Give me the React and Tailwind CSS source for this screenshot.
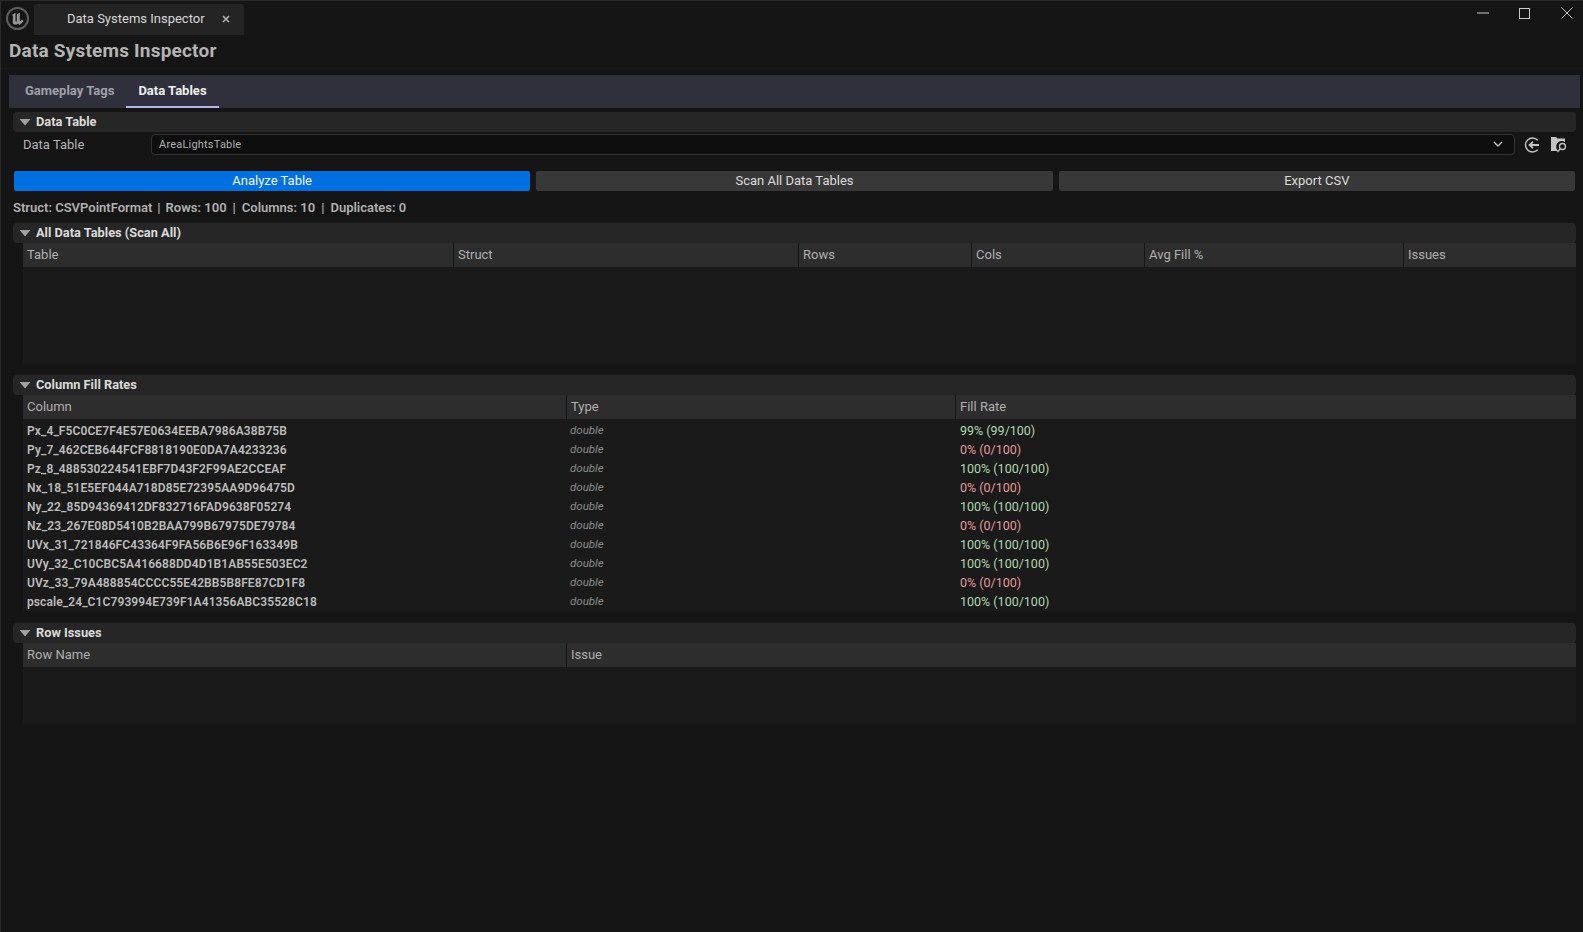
const font = { fontFamily: 'Roboto, "Liberation Sans", sans-serif' };

function Section({ title }) {
  return (
    <div className="flex h-5 ml-[4px] mr-[7px] items-center rounded-[4px] bg-[#262626]">
      <svg width="12" height="8" viewBox="0 0 12 8" className="ml-[6px] mr-[5px] shrink-0">
        <path d="M0.5 1 H11.5 L6 7.5 Z" fill="#a0a0a0" />
      </svg>
      <span className="text-[12.8px] font-bold leading-none text-[#dcdcdc]">{title}</span>
    </div>
  );
}

function HeaderRow({ cols }) {
  return (
    <div className="flex h-6 bg-[#2d2d2d]">
      {cols.map(([name, w], i) => (
        <div
          key={name}
          style={w ? { width: w } : undefined}
          className={`flex items-center pl-1 text-[13px] text-[#b0b0b0] ${w ? "shrink-0" : "grow"} ${
            i < cols.length - 1 ? "border-r border-[#161616]" : ""
          }`}
        >
          {name}
        </div>
      ))}
    </div>
  );
}

const rows = [
  ["Px_4_F5C0CE7F4E57E0634EEBA7986A38B75B", "99% (99/100)", true],
  ["Py_7_462CEB644FCF8818190E0DA7A4233236", "0% (0/100)", false],
  ["Pz_8_488530224541EBF7D43F2F99AE2CCEAF", "100% (100/100)", true],
  ["Nx_18_51E5EF044A718D85E72395AA9D96475D", "0% (0/100)", false],
  ["Ny_22_85D94369412DF832716FAD9638F05274", "100% (100/100)", true],
  ["Nz_23_267E08D5410B2BAA799B67975DE79784", "0% (0/100)", false],
  ["UVx_31_721846FC43364F9FA56B6E96F163349B", "100% (100/100)", true],
  ["UVy_32_C10CBC5A416688DD4D1B1AB55E503EC2", "100% (100/100)", true],
  ["UVz_33_79A488854CCCC55E42BB5B8FE87CD1F8", "0% (0/100)", false],
  ["pscale_24_C1C793994E739F1A41356ABC35528C18", "100% (100/100)", true],
];

export default function App() {
  return (
    <div
      style={font}
      className="relative h-[932px] w-[1583px] overflow-hidden border-l border-t border-[#2c2c2c] bg-[#151515]"
    >
      {/* title bar */}
      <div className="flex h-[34px] items-end">
        <div className="ml-[5px] mr-[5px] mb-[5px] flex h-[23px] w-[23px] items-center justify-center rounded-full border-2 border-[#5e5e5e]">
          <svg width="15" height="15" viewBox="0 0 15 15">
            <path
              d="M1.5 4.5 L5.5 1.5 L5.5 10 C5.8 10.8 6.4 10.8 6.8 10.2 L6.8 3.5 L9.8 1.5 L9.8 10.5 L12 8.5 L13.5 10 C12 12 10.5 13.6 9.2 14 L8 12.4 C6.5 14 4 14 3 12.4 C2.6 11.5 3 6 3 4.5 Z"
              fill="#969696"
            />
          </svg>
        </div>
        <div className="flex h-[31px] w-[210px] items-center rounded-t-[3px] bg-[#242424] pb-[2px]">
          <span className="ml-[33px] text-[13px] text-[#d8d8d8]">Data Systems Inspector</span>
          <svg width="8" height="8" viewBox="0 0 8 8" className="ml-[17px]">
            <path d="M1 1 L7 7 M7 1 L1 7" stroke="#b0b0b0" strokeWidth="1.6" />
          </svg>
        </div>
        <div className="mb-[16px] ml-auto mr-[10px] flex items-center gap-[30px]">
          <svg width="12" height="2" viewBox="0 0 12 2">
            <path d="M0 1 H12" stroke="#c8c8c8" strokeWidth="1" />
          </svg>
          <svg width="11" height="11" viewBox="0 0 11 11">
            <rect x="0.5" y="0.5" width="10" height="10" fill="none" stroke="#c8c8c8" />
          </svg>
          <svg width="12" height="12" viewBox="0 0 12 12" className="ml-[1px]">
            <path d="M0.5 0.5 L11.5 11.5 M11.5 0.5 L0.5 11.5" stroke="#c8c8c8" strokeWidth="1" />
          </svg>
        </div>
      </div>

      {/* page title */}
      <div className="flex h-[34px] items-center pl-2 text-[19px] font-bold tracking-[0.2px] text-[#b4b4b4] border-b border-[#1a1a1a]">
        Data Systems Inspector
      </div>

      {/* tabs */}
      <div className="mt-[6px] ml-2 mr-[3px] flex h-[33px] bg-[#2f303c]">
        <div className="flex w-[117px] items-center pl-4 pb-[2px] text-[13px] font-bold text-[#a0a0a8]">
          Gameplay Tags
        </div>
        <div className="flex w-[93px] items-center justify-center border-b-2 border-[#b4b4f0] text-[13px] font-bold text-[#f0f0f0]">
          Data Tables
        </div>
      </div>

      <div className="mt-1 pl-2 pr-0">
        <Section title="Data Table" />
        <div className="mt-[2px] flex h-[21px] items-center">
          <span className="ml-[14px] w-[128px] text-[13px] text-[#b4b4b4]">Data Table</span>
          <div className="flex h-[21px] w-[1364px] items-center justify-between rounded-[4px] border border-[#333333] bg-[#0e0e0e] pl-[7px] pr-[11px]">
            <span className="pt-[1px] text-[11px] tracking-[0.2px] text-[#b0b0b0]">AreaLightsTable</span>
            <svg width="10" height="7" viewBox="0 0 10 7">
              <path d="M1 1 L5 5 L9 1" fill="none" stroke="#c0c0c0" strokeWidth="1.4" />
            </svg>
          </div>
          <svg width="16" height="16" viewBox="0 0 16 16" className="ml-[9px]">
            <path d="M13.6 3.2 A7 7 0 1 0 13.6 12.8" fill="none" stroke="#c4c4c4" strokeWidth="1.4" />
            <path d="M15 8 H6 M9 4.8 L5.5 8 L9 11.2" fill="none" stroke="#c4c4c4" strokeWidth="1.8" />
          </svg>
          <svg width="17" height="16" viewBox="0 0 17 16" className="ml-[11px]">
            <path d="M0 0 H5 L6.5 1.5 H14 V5 A5 5 0 0 0 7.5 14 H0 Z" fill="#c4c4c4" />
            <circle cx="11.5" cy="9.5" r="3" fill="none" stroke="#c4c4c4" strokeWidth="1.3" />
            <path d="M9.3 11.8 L6.5 15" stroke="#c4c4c4" strokeWidth="1.3" />
          </svg>
        </div>

        <div className="mt-[16px] ml-[5px] mr-[8px] flex gap-[6px]">
          <div className="flex h-5 flex-1 items-center justify-center rounded-[2px] bg-[#0070e0] text-[13px] text-[#f4f4f4]">
            Analyze Table
          </div>
          <div className="flex h-5 flex-1 items-center justify-center rounded-[2px] bg-[#383838] text-[13px] text-[#dcdcdc]">
            Scan All Data Tables
          </div>
          <div className="flex h-5 flex-1 items-center justify-center rounded-[2px] bg-[#383838] text-[13px] text-[#dcdcdc]">
            Export CSV
          </div>
        </div>

        <div className="ml-[4px] mt-[9px] flex h-[15px] items-center text-[13px] font-semibold text-[#b0b0b0] whitespace-pre">
          <span>Struct: CSVPointFormat</span>
          <span className="mx-[5px]">|</span>
          <span>Rows: 100</span>
          <span className="mx-[6px]">|</span>
          <span>Columns: 10</span>
          <span className="mx-[6px]">|</span>
          <span>Duplicates: 0</span>
        </div>

        <div className="mt-[8px]">
          <Section title="All Data Tables (Scan All)" />
          <div className="ml-[14px] mr-[7px]">
            <HeaderRow
              cols={[
                ["Table", "431px"],
                ["Struct", "345px"],
                ["Rows", "173px"],
                ["Cols", "173px"],
                ["Avg Fill %", "259px"],
                ["Issues", null],
              ]}
            />
            <div className="h-[96px] bg-[#1a1a1a]" />
          </div>
        </div>

        <div className="mt-[12px]">
          <Section title="Column Fill Rates" />
          <div className="ml-[14px] mr-[7px]">
            <HeaderRow
              cols={[
                ["Column", "544px"],
                ["Type", "389px"],
                ["Fill Rate", null],
              ]}
            />
            <div className="bg-[#1a1a1a] pt-[2px]">
              {rows.map(([name, rate, ok]) => (
                <div key={name} className="flex h-[19px] items-center">
                  <span className="w-[544px] shrink-0 pl-1 text-[12px] font-semibold tracking-[0.1px] text-[#bcbcbc]">
                    {name}
                  </span>
                  <span className="w-[389px] shrink-0 pl-[3px] text-[11.5px] italic text-[#8c8c8c]">double</span>
                  <span className={`pl-1 pt-[1px] text-[12.5px] ${ok ? "text-[#b0d8b0]" : "text-[#e49a9a]"}`}>{rate}</span>
                </div>
              ))}
            </div>
          </div>
        </div>

        <div className="mt-[12px]">
          <Section title="Row Issues" />
          <div className="ml-[14px] mr-[7px]">
            <HeaderRow
              cols={[
                ["Row Name", "544px"],
                ["Issue", null],
              ]}
            />
            <div className="h-[56px] bg-[#1a1a1a]" />
          </div>
        </div>
      </div>
    </div>
  );
}
